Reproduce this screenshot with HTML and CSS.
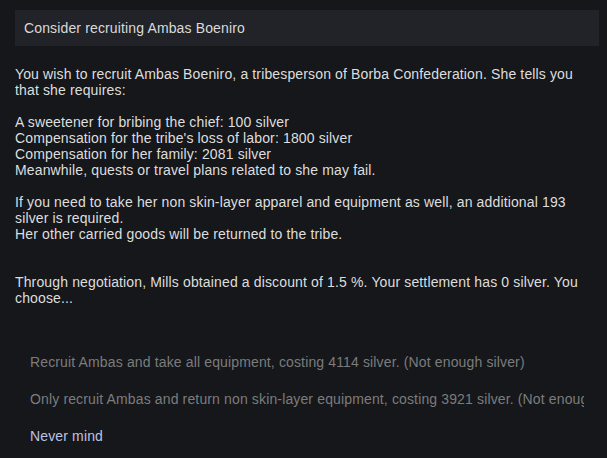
FILE: index.html
```html
<!DOCTYPE html>
<html lang="en">
<head>
    <meta charset="UTF-8">
    <meta name="viewport" content="width=device-width, initial-scale=1.0">
    <title>Recruit</title>
    <link rel="stylesheet" href="styles.css">
</head>
<body>
    <div class="dialog">
        <div class="title-bar">Consider recruiting Ambas Boeniro</div>

        <div class="dialog-text">You wish to recruit Ambas Boeniro, a tribesperson of Borba Confederation. She tells you that she requires:

A sweetener for bribing the chief: 100 silver
Compensation for the tribe's loss of labor: 1800 silver
Compensation for her family: 2081 silver
Meanwhile, quests or travel plans related to she may fail.

If you need to take her non skin-layer apparel and equipment as well, an additional 193 silver is required.
Her other carried goods will be returned to the tribe.


Through negotiation, Mills obtained a discount of 1.5 %. Your settlement has 0 silver. You choose...</div>

        <!-- Options -->
        <div class="options">
            <div class="option disabled">Recruit Ambas and take all equipment, costing 4114 silver. (Not enough silver)</div>
            <div class="option disabled">Only recruit Ambas and return non skin-layer equipment, costing 3921 silver. (Not enough silver)</div>
            <div class="option">Never mind</div>
        </div>
    </div>
</body>
</html>
```

FILE: styles.css
```css
*{
    box-sizing: border-box;
    margin: 0;
    padding: 0;
}

body {
    font-family: "Liberation Sans", Arial, sans-serif;
    font-size: 14px;
    letter-spacing: 0.14px;
    background-color: #15171b;
    color: #dedede;
}
.dialog {
    padding: 10px 8px 0 15px;
}
.title-bar {
    height: 36px;
    display: flex;
    align-items: center;
    padding-left: 9px;
    background: #212328;
    color: #d9d9d9;
}
.dialog-text {
    width: 569px;
    margin-top: 20px;
    line-height: 16px;
    white-space: pre-line;
}
.options {
    width: 569px;
    margin-top: 38px;
}
.option {
    padding: 10px 0 11px 15px;
    line-height: 16px;
    white-space: nowrap;
    overflow: hidden;
    color: #bcc2e6;
}
.option.disabled {
    color: #7c7c7c;
}
```
